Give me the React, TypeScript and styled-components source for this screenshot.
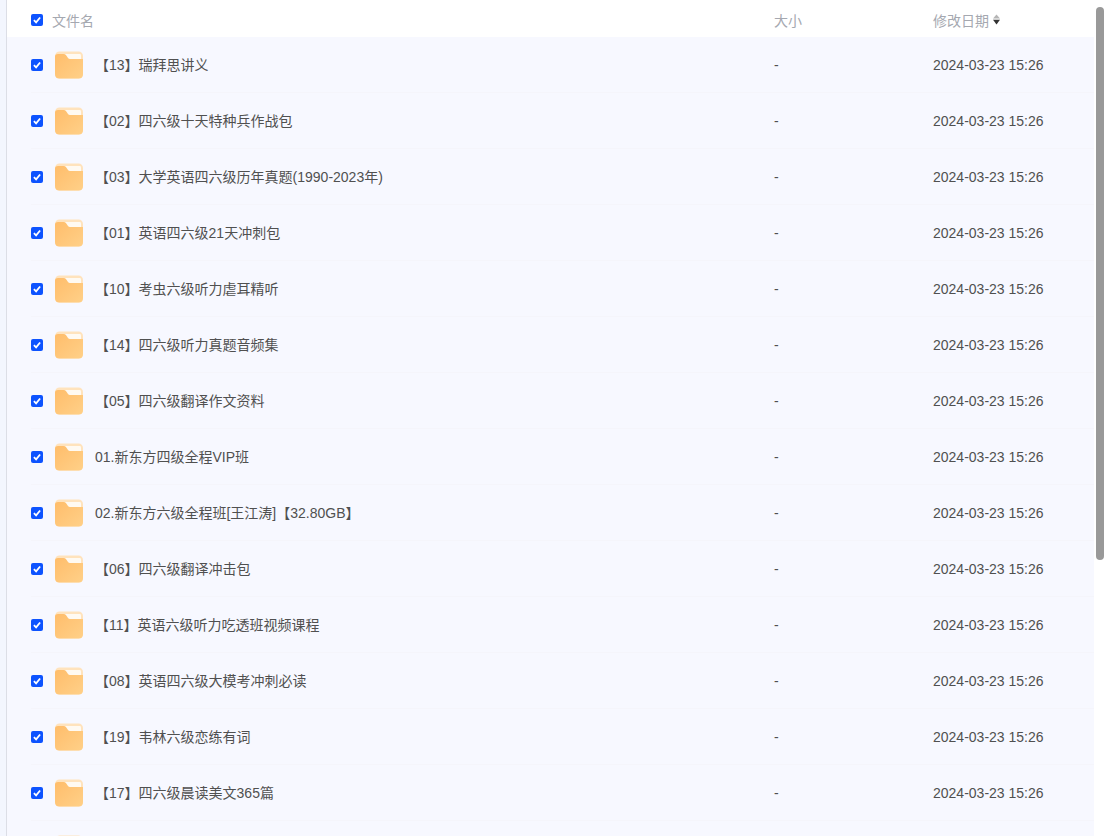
import styled, { createGlobalStyle } from 'styled-components';

const files = [
    '【13】瑞拜思讲义',
    '【02】四六级十天特种兵作战包',
    '【03】大学英语四六级历年真题(1990-2023年)',
    '【01】英语四六级21天冲刺包',
    '【10】考虫六级听力虐耳精听',
    '【14】四六级听力真题音频集',
    '【05】四六级翻译作文资料',
    '01.新东方四级全程VIP班',
    '02.新东方六级全程班[王江涛]【32.80GB】',
    '【06】四六级翻译冲击包',
    '【11】英语六级听力吃透班视频课程',
    '【08】英语四六级大模考冲刺必读',
    '【19】韦林六级恋练有词',
    '【17】四六级晨读美文365篇',
];

function Check() {
    return (
        <CheckBox>
            <svg width="8" height="8" viewBox="0 0 8 8">
                <path d="M0.9 4.2 L3.1 6.4 L7.1 1.5" fill="none" stroke="#fff" strokeWidth="1.8" />
            </svg>
        </CheckBox>
    );
}

function FolderIcon() {
    return (
        <FolderSvg width="29" height="28" viewBox="0 0 29 28">
            <defs>
                <linearGradient id="folderFront" x1="0" y1="0" x2="1" y2="1">
                    <stop offset="0" stopColor="#ffbd6b" />
                    <stop offset="1" stopColor="#ffd088" />
                </linearGradient>
            </defs>
            <rect x="1" y="0.5" width="28" height="27" rx="4.5" fill="#ffe3bd" />
            <path d="M10 3 H26 Q27 3 27 4.5 V8.5 H14 Z" fill="#fffaf2" />
            <path
                d="M1 5.5 Q1 3 4 3 H10 Q11.5 3 12.5 4.7 L14 7.1 Q14.7 8.1 16 8.1 H29 V23 Q29 27.5 24.5 27.5 H5.5 Q1 27.5 1 23 Z"
                fill="url(#folderFront)"
            />
        </FolderSvg>
    );
}

export default function App() {
    return (
        <>
            <GlobalStyle />
            <Page>
                <LeftStrip />
                <Table>
                    <HeaderRow>
                        <NameHead>
                            <Check />
                            <HeadLabel>文件名</HeadLabel>
                        </NameHead>
                        <SizeCell><HeadLabel>大小</HeadLabel></SizeCell>
                        <DateCell>
                            <HeadLabel>修改日期</HeadLabel>
                            <SortIcon width="7" height="11" viewBox="0 0 7 11">
                                <path d="M3.5 0.5 L7 4.6 H0 Z" fill="#b5b5b5" />
                                <path d="M3.5 10.5 L7 5.8 H0 Z" fill="#333" />
                            </SortIcon>
                        </DateCell>
                    </HeaderRow>
                    <Body>
                        {files.map((name) => (
                            <Row key={name}>
                                <NameCell>
                                    <Check />
                                    <FolderIcon />
                                    <FileName>{name}</FileName>
                                </NameCell>
                                <SizeCell>-</SizeCell>
                                <DateCell>2024-03-23 15:26</DateCell>
                            </Row>
                        ))}
                        {/* next row is cut by the window, only the top of its folder shows */}
                        <Row>
                            <PartialCell>
                                <FolderIcon />
                            </PartialCell>
                        </Row>
                    </Body>
                </Table>
                <ScrollTrack>
                    <ScrollThumb />
                </ScrollTrack>
            </Page>
        </>
    );
}

const GlobalStyle = createGlobalStyle`
    html, body {
        margin: 0;
        height: 836px;
        overflow: hidden;
        background: #fff;
    }
`;

const Page = styled.div`
    display: flex;
    height: 836px;
    overflow: hidden;
    font-family: "Liberation Sans", "Noto Sans CJK SC", sans-serif;
    font-size: 14px;
    color: #505050;
`;

const LeftStrip = styled.div`
    width: 6px;
    flex: none;
    background: #f3f6fe;
`;

const Table = styled.div`
    width: 1087px;
    flex: none;
    border-left: 1px solid #dcdee6;
`;

const HeaderRow = styled.div`
    display: flex;
    align-items: center;
    height: 37px;
    padding: 2px 0 0 24px;
    box-sizing: border-box;
`;

const NameHead = styled.div`
    display: flex;
    align-items: center;
    width: 743px;
    flex: none;
    gap: 9px;
`;

const HeadLabel = styled.span`
    color: #a5a8b0;
`;

const SortIcon = styled.svg`
    margin-left: 4px;
`;

const CheckBox = styled.span`
    display: flex;
    align-items: center;
    justify-content: center;
    width: 12px;
    height: 12px;
    flex: none;
    border-radius: 2px;
    background: #0d53ff;
`;

const FolderSvg = styled.svg`
    flex: none;
`;

const Body = styled.div`
    background: #f7f8ff;
    padding-left: 24px;
`;

const Row = styled.div`
    display: flex;
    align-items: center;
    height: 56px;
    box-sizing: border-box;
    border-bottom: 1px solid #f5f5fb;
`;

const NameCell = styled.div`
    display: flex;
    align-items: center;
    width: 743px;
    flex: none;
    gap: 11px;
`;

const PartialCell = styled.div`
    display: flex;
    padding-left: 23px;
`;

const FileName = styled.span`
    margin-left: 1px;
    padding-bottom: 2px;
    white-space: nowrap;
`;

const SizeCell = styled.div`
    width: 159px;
    flex: none;
`;

const DateCell = styled.div`
    display: flex;
    align-items: center;
    flex: 1;
    white-space: nowrap;
`;

const ScrollTrack = styled.div`
    flex: 1;
    padding: 7px 2px 0;
`;

const ScrollThumb = styled.div`
    width: 8px;
    height: 553px;
    background: #999;
    border-radius: 4px;
`;
